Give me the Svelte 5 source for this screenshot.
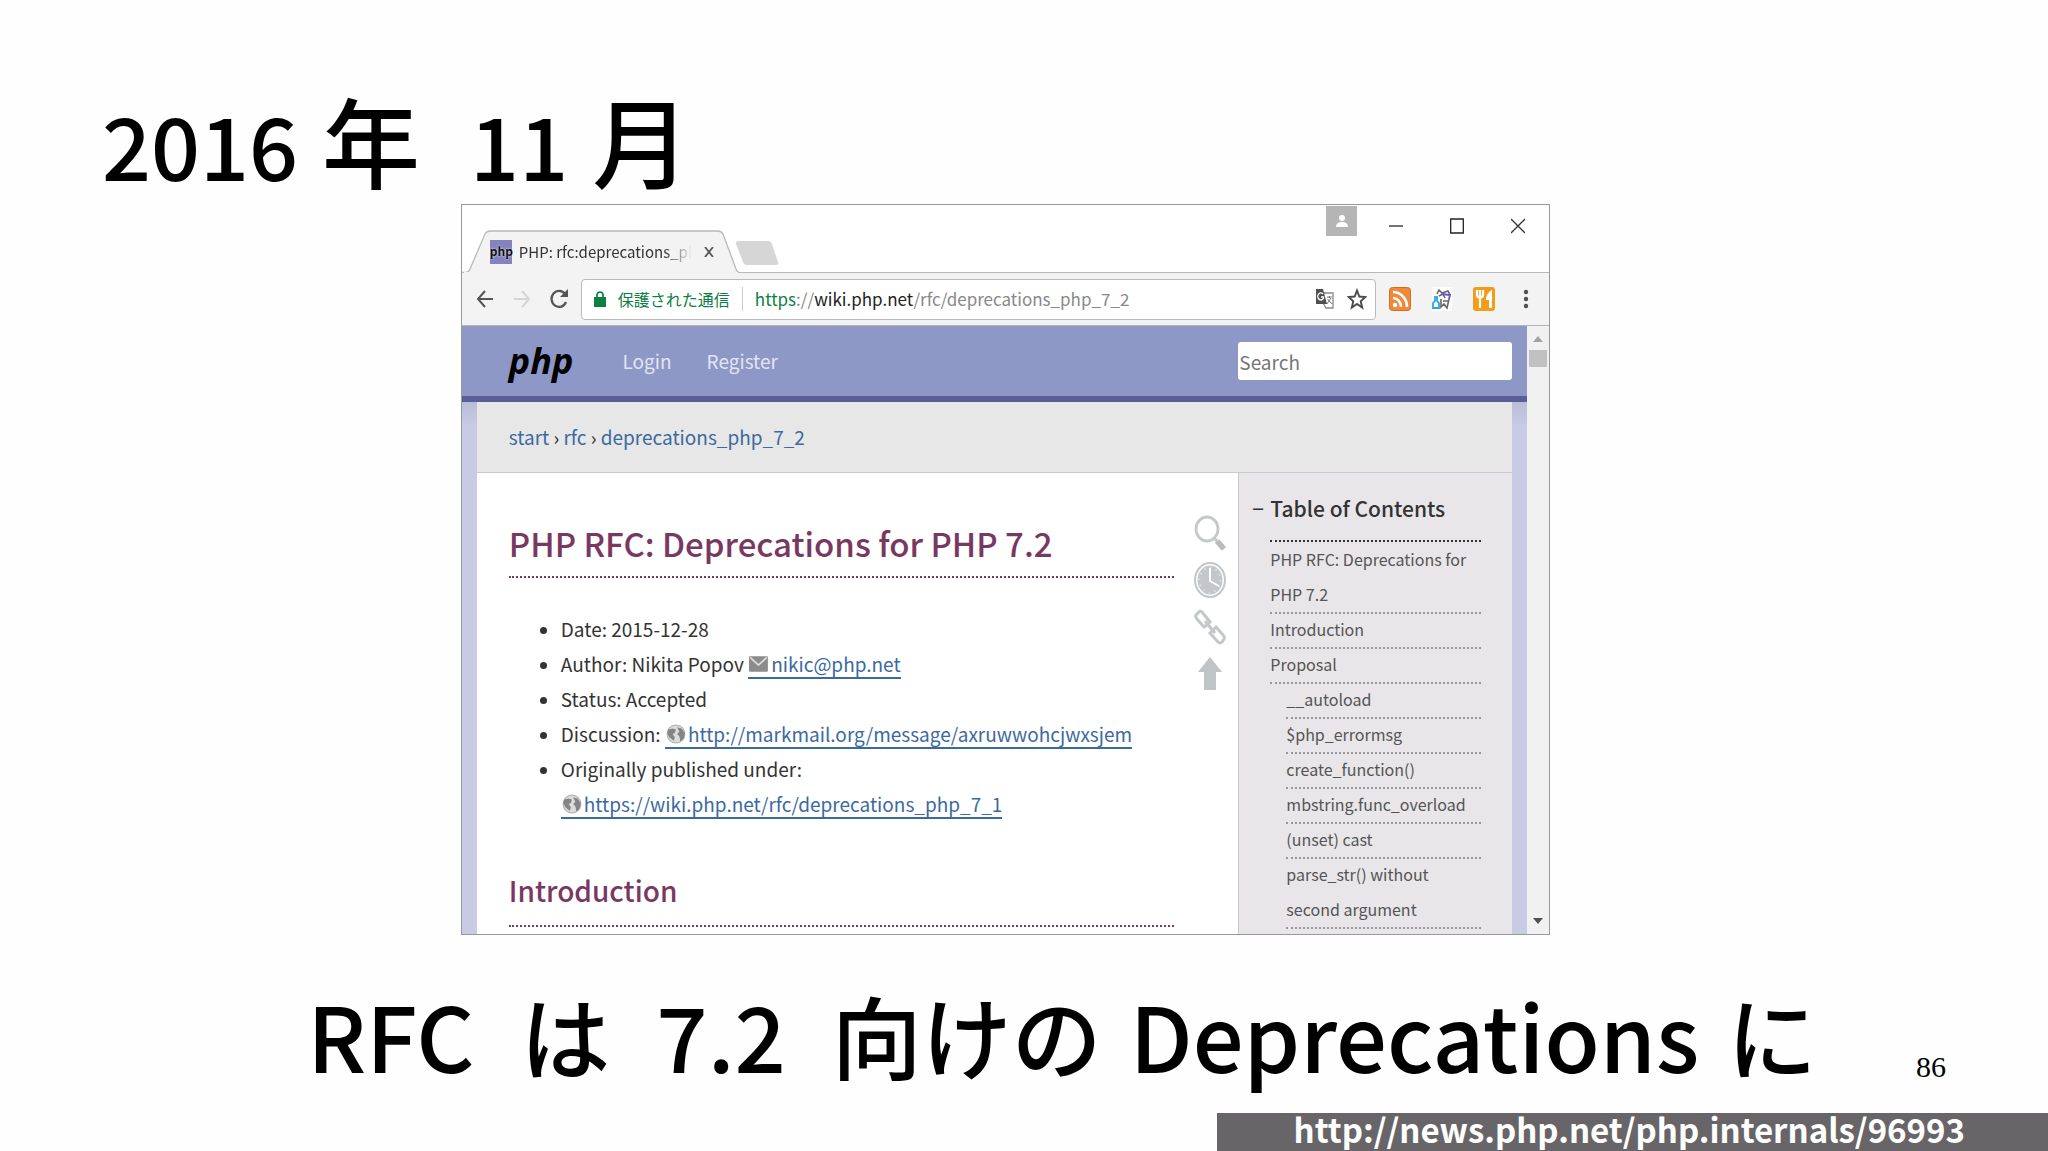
<script>
  const toc = [
    { text: 'PHP RFC: Deprecations for PHP 7.2', sub: false },
    { text: 'Introduction', sub: false },
    { text: 'Proposal', sub: false },
    { text: '__autoload', sub: true },
    { text: '$php_errormsg', sub: true },
    { text: 'create_function()', sub: true },
    { text: 'mbstring.func_overload', sub: true },
    { text: '(unset) cast', sub: true },
    { text: 'parse_str() without second argument', sub: true },
  ];
</script>

{#snippet globe()}
  <svg class="inline-icon" viewBox="0 0 18 18" aria-hidden="true">
    <circle cx="9" cy="9" r="8" fill="#dcdcdc" stroke="#b4b4b4" />
    <path d="M2 5 6 4 9 5 8 8 6 9 8 12 7 15 3 12 1 8Z M10 3 14 4 17 8 16 13 13 16 12 11 10 9 12 7Z" fill="#858585" />
  </svg>
{/snippet}

<main class="slide">
  <h1 class="title"><span>2016</span><span class="kanji">年</span><span class="month">11</span><span class="kanji">月</span></h1>

  <section class="browser" aria-label="PHP RFC">
    <div class="tabstrip">
      <div class="tab">
        <svg class="tab-shape" viewBox="0 0 277 43" aria-hidden="true">
          <path d="M0 42.500H4Q7 42 8 39L23 4Q25 1 28 1H256Q259 1 261 4L274 39Q275 42 277 42.500" fill="#f3f3f3" stroke="#b9b9b9" stroke-width="1.300" />
          <path d="M2 43H276" stroke="#f3f3f3" stroke-width="2" />
        </svg>
        <span class="favicon">php</span>
        <span class="tab-text">PHP: rfc:deprecations_ph</span>
        <button class="bare tab-close" aria-label="Close tab">
          <svg width="10" height="10" viewBox="0 0 10 10"><path d="M1 0 9 10M9 0 1 10" stroke="#555" stroke-width="1.800" /></svg>
        </button>
      </div>
      <button class="bare newtab" aria-label="New tab">
        <svg width="44" height="26" viewBox="0 0 44 26"><path d="M3 1H33Q36 1 37 4L43 22Q44 25 41 25H12Q9 25 8 22L1 4Q0 1 3 1Z" fill="#d6d6d6" /></svg>
      </button>
      <div class="controls">
        <button class="bare user" aria-label="Profile">
          <svg width="12" height="14" viewBox="0 0 12 14" fill="#fff"><circle cx="6" cy="4" r="3" /><path d="M0 13Q0 8 6 8T12 13Z" /></svg>
        </button>
        <button class="bare win" aria-label="Minimize"><svg width="14" height="16" viewBox="0 0 14 16"><path d="M0 8H14" stroke="#444" stroke-width="1.500" /></svg></button>
        <button class="bare win" aria-label="Maximize"><svg width="14" height="16" viewBox="0 0 14 16"><path d="M.700 1H13.300V15H.700Z" fill="none" stroke="#222" stroke-width="1.300" /></svg></button>
        <button class="bare win" aria-label="Close"><svg width="14" height="16" viewBox="0 0 14 16"><path d="M0 1 14 15M14 1 0 15" stroke="#333" stroke-width="1.300" /></svg></button>
      </div>
    </div>

    <div class="toolbar">
      <div class="nav-buttons">
        <button class="bare" aria-label="Back"><svg width="18" height="20" viewBox="0 0 18 20" fill="none" stroke="#555" stroke-width="2"><path d="M17 10H2M9 2 2 10 9 18" /></svg></button>
        <button class="bare" aria-label="Forward"><svg width="18" height="20" viewBox="0 0 18 20" fill="none" stroke="#d5d5d5" stroke-width="2"><path d="M1 10H16M9 2 16 10 9 18" /></svg></button>
        <button class="bare" aria-label="Reload"><svg width="18" height="20" viewBox="0 0 18 20"><path d="M15 5A7.500 8 0 1 0 16 13" fill="none" stroke="#555" stroke-width="2.300" /><path d="M18 0V8H10Z" fill="#555" /></svg></button>
      </div>
      <div class="address">
        <svg width="12" height="16" viewBox="0 0 12 16"><path d="M0 6H12V16H0Z" fill="#0b8043" /><path d="M3 7V4A3 3 0 0 1 9 4V7" fill="none" stroke="#0b8043" stroke-width="1.700" /></svg>
        <span class="secure">保護された通信</span>
        <span class="rule"></span>
        <span class="url"><span class="green">https</span>://<b>wiki.php.net</b>/rfc/deprecations_php_7_2</span>
        <button class="bare" aria-label="Translate">
          <svg width="20" height="22" viewBox="0 0 20 22"><path d="M8 5H18V20H11L8 15" fill="#fff" stroke="#888" stroke-width="1.300" /><path d="M12 9H17M14.500 8V10M12 16 16 10M12.500 11 17 16" stroke="#777" fill="none" /><path d="M1 1H8L12 16H1Z" fill="#505050" /><path d="M8 6A3 3.500 0 1 0 8.500 10V9H6" fill="none" stroke="#fff" stroke-width="1.400" /></svg>
        </button>
        <button class="bare" aria-label="Bookmark">
          <svg width="20" height="22" viewBox="0 0 20 22"><path d="M10 2.500 12.300 8.500 18.300 9 13.700 13.200 15.200 19.500 10 16 4.800 19.500 6.300 13.200 1.700 9 7.700 8.500Z" fill="none" stroke="#4a4a4a" stroke-width="1.900" /></svg>
        </button>
      </div>
      <div class="extensions">
        <button class="bare" aria-label="Feed"><svg width="22" height="24" viewBox="0 0 22 24"><rect x=".5" y=".5" width="21" height="23" rx="3" fill="#f0893a" stroke="#d96d1c" /><circle cx="6" cy="18" r="2.200" fill="#fff" /><path d="M4 11A8 9 0 0 1 12 20M4 5A14 15 0 0 1 18 20" fill="none" stroke="#fff" stroke-width="2.600" /></svg></button>
        <button class="bare" aria-label="Reader"><svg width="22" height="24" viewBox="0 0 22 24" fill="none"><path d="M1 0H21V24H1Z" fill="#fff" /><path d="M6 7 8 3 11 6 17 4 19 8M8 9 12 7 14 11M10 12V20L13 17 16 21 18 12M12 14H17" stroke="#666" stroke-width="1.600" /><path d="M11 7 19 8 18 12" stroke="#5a52d8" stroke-width="1.800" /><path d="M4 9V14L2 16V21H8V16L6 14V9" stroke="#25a7e8" stroke-width="1.800" /></svg></button>
        <button class="bare" aria-label="Dining"><svg width="22" height="24" viewBox="0 0 22 24"><rect width="22" height="24" rx="3" fill="#f39c1b" /><path d="M4 3V8Q4 10 7 11V21M7 3V11M10 3V8Q10 10 7 11" fill="none" stroke="#fff" stroke-width="2.200" /><path d="M19 3V21H16V13H13Q13 6 19 3Z" fill="#fff" /></svg></button>
        <button class="bare menu" aria-label="Menu"><svg width="6" height="22" viewBox="0 0 6 22" fill="#505050"><circle cx="3" cy="4" r="2.200" /><circle cx="3" cy="11" r="2.200" /><circle cx="3" cy="18" r="2.200" /></svg></button>
      </div>
    </div>

    <div class="viewport">
      <div class="page">
        <header class="site-header">
          <a class="logo" href="#php">php</a>
          <a href="#login">Login</a>
          <a href="#register">Register</a>
          <input type="search" placeholder="Search" aria-label="Search" />
        </header>
        <div class="sheet">
          <nav class="crumbs"><a href="#start">start</a> › <a href="#rfc">rfc</a> › <a href="#dep">deprecations_php_7_2</a></nav>
          <div class="columns">
            <article>
              <h2>PHP RFC: Deprecations for PHP 7.2</h2>
              <ul class="meta">
                <li>Date: 2015-12-28</li>
                <li>Author: Nikita Popov <a href="#mail"><svg class="inline-icon" viewBox="0 0 18 18" aria-hidden="true"><rect y="2" width="17" height="14" rx="1" fill="#8c8c8c" /><path d="M1 3 8.500 10 16 3" fill="none" stroke="#ddd" stroke-width="1.500" /></svg>nikic@php.net</a></li>
                <li>Status: Accepted</li>
                <li>Discussion: <a href="#discussion">{@render globe()}http://markmail.org/message/axruwwohcjwxsjem</a></li>
                <li>Originally published under:<br /><a href="#origin">{@render globe()}https://wiki.php.net/rfc/deprecations_php_7_1</a></li>
              </ul>
              <h3>Introduction</h3>
            </article>
            <div class="tools">
              <button class="bare" aria-label="Show page source"><svg width="32" height="36" viewBox="0 0 32 36" fill="none"><ellipse cx="13" cy="14" rx="11" ry="12" stroke="#c6c9cb" stroke-width="2.800" /><path d="M20 23 23 26" stroke="#c6c9cb" stroke-width="3" /><path d="M23 26 30 34" stroke="#b9bdbf" stroke-width="5.500" /></svg></button>
              <button class="bare" aria-label="Old revisions"><svg width="32" height="36" viewBox="0 0 32 36" fill="none"><ellipse cx="16" cy="18" rx="15" ry="17" fill="#fff" stroke="#c3c7c9" stroke-width="2" /><ellipse cx="16" cy="18" rx="12.500" ry="14.500" fill="#c3c7c9" /><ellipse cx="16" cy="18" rx="10.500" ry="12.500" stroke="#e9ebec" stroke-width="1.500" stroke-dasharray="1.300 4.700" /><path d="M16 6V19L25 24" stroke="#fff" stroke-width="2" /></svg></button>
              <button class="bare" aria-label="Backlinks"><svg width="32" height="36" viewBox="0 0 32 36" fill="none" stroke="#c3c7c9" stroke-width="3"><path d="M13 16 16 13 8 3Q6 1 4 4L2 6Q1 8 3 10L10 18 13 16" /><path d="M19 21 16 24 24 33Q26 35 28 33L30 30Q31 28 29 26L22 18 19 21" /><path d="M11 12 21 24" /></svg></button>
              <button class="bare" aria-label="Back to top"><svg width="32" height="36" viewBox="0 0 32 36"><path d="M16 1 28 16H22V34H10V16H4Z" fill="#bfc4c6" /></svg></button>
            </div>
            <aside>
              <div class="toc-head"><span class="minus">−</span><h3>Table of Contents</h3></div>
              <ul class="toc">
                {#each toc as item}
                  <li class:sub={item.sub}><a href="#toc">{item.text}</a></li>
                {/each}
              </ul>
            </aside>
          </div>
        </div>
      </div>
      <div class="scrollbar" aria-hidden="true">
        <svg width="10" height="6" viewBox="0 0 10 6"><path d="M0 6 5 0 10 6Z" fill="#a3a3a3" /></svg>
        <div class="thumb"></div>
        <svg class="down" width="10" height="6" viewBox="0 0 10 6"><path d="M0 0 5 6 10 0Z" fill="#505050" /></svg>
      </div>
    </div>
  </section>

  <div class="bottom">
    <p class="caption"><span>RFC</span><span class="wide">は</span><span class="wide">7.2</span><span class="wide">向けの</span><span>Deprecations</span><span>に</span></p>
    <span class="number">86</span>
  </div>
  <footer><a href="#news">http://news.php.net/php.internals/96993</a></footer>
</main>

<style>
  :global(body) { margin: 0; background: #fefefe; }
  * { box-sizing: border-box; }
  .slide {
    min-height: 100vh;
    display: flex;
    flex-direction: column;
    font-family: "Noto Sans CJK JP", "Noto Sans", sans-serif;
    color: #333;
  }
  .title {
    display: flex;
    align-items: baseline;
    gap: 24px;
    margin: 0;
    padding: 78px 0 0 102px;
    height: 204px;
    font-size: 86px;
    line-height: 120px;
    font-weight: 500;
    color: #000;
  }
  .kanji { font-size: 98px; }
  .month { margin-left: 26px; }
  .bare { display: flex; padding: 0; border: 0; background: none; align-items: center; justify-content: center; }
  svg { display: block; flex: none; }
  a { color: #3b6aa0; text-decoration: none; }

  .browser { width: 53.2%; margin-left: 22.5%; border: 1px solid #999; background: #fff; }
  .tabstrip { display: flex; height: 68px; border-bottom: 1px solid #b9b9b9; }
  .tab { position: relative; align-self: flex-end; display: flex; align-items: center; width: 277px; height: 43px; margin-bottom: -1px; padding-left: 28px; }
  .tab-shape { position: absolute; inset: 0; width: 100%; height: 100%; }
  .favicon { position: relative; width: 22px; height: 24px; background: #8583be; color: #111; font-size: 12px; line-height: 22px; font-weight: 700; text-align: center; text-shadow: 0 0 2px #fff; }
  .tab-text { position: relative; flex: none; width: 173px; margin-left: 7px; white-space: nowrap; font-size: 15px; line-height: 24px; mask-image: linear-gradient(90deg, #000 84%, transparent); }
  .tab-close { position: relative; margin-left: 12px; }
  .newtab { align-self: flex-end; margin: 0 0 6px -4px; }
  .controls { display: flex; margin-left: auto; padding-right: 24px; gap: 47px; }
  .win { height: 42px; }
  .user { width: 31px; height: 30px; background: #b5b5b5; margin: 1px -15px 0 0; }

  .toolbar { display: flex; align-items: center; gap: 13px; height: 53px; padding: 0 20px 0 14px; background: #f3f3f3; border-bottom: 1px solid #b5b5b5; }
  .nav-buttons { display: flex; gap: 19px; }
  .address { flex: 1; display: flex; align-items: center; gap: 12px; height: 41px; padding: 0 8px 0 12px; background: #fff; border: 1px solid #bbb; border-radius: 4px; font-size: 17px; line-height: 26px; white-space: nowrap; }
  .secure { color: #0b8043; font-size: 16px; }
  .rule { width: 1px; height: 24px; background: #ccc; }
  .url { flex: 1; color: #888; }
  .url b { font-weight: 400; color: #222; }
  .green { color: #0b8043; }
  .extensions { display: flex; align-items: center; gap: 20px; }
  .menu { margin-left: 8px; }

  .viewport { display: flex; }
  .page { flex: 1; min-width: 0; background: linear-gradient(#b4b9d6 70px, #c8cbe3 100px); }
  .site-header { display: flex; align-items: center; height: 76px; padding: 0 15px 0 47px; background: #8e98c6; border-bottom: 6px solid #595e96; font-size: 19px; line-height: 30px; }
  .site-header a { color: #e2e4f3; margin-right: 35px; }
  .site-header .logo { color: #000; font-family: "Open Sans", sans-serif; font-style: italic; font-weight: 700; font-size: 36px; line-height: 42px; margin-right: 49px; }
  .site-header input { width: 274px; height: 38px; margin-left: auto; padding: 0 1px; border: 0; border-radius: 3px; background: #fff; font: inherit; }
  .site-header input::placeholder { color: #777; opacity: 1; }
  .sheet { margin: 0 15px; background: #fff; }
  .crumbs { height: 71px; padding-left: 32px; background: #e7e7e7; border-bottom: 1px solid #c8cacc; font-size: 19px; line-height: 70px; }
  .columns { display: flex; }
  article { flex: 1; min-width: 0; padding: 45px 20px 7px 32px; }
  h2, article h3 { margin: 0; color: #793862; border-bottom: 2px dotted #793862; font-weight: 500; }
  h2 { font-size: 33px; line-height: 50px; padding-bottom: 8px; }
  article h3 { font-size: 28px; line-height: 50px; padding-bottom: 10px; }
  .meta { margin: 33px 0 44px; padding-left: 52px; font-size: 19px; line-height: 35px; white-space: nowrap; }
  .meta a { border-bottom: 2px solid #3b6aa0; }
  .inline-icon { display: inline-block; width: 20px; height: 20px; margin: 0 2px 0 1px; vertical-align: -2px; }
  .tools { display: flex; flex-direction: column; gap: 11px; padding: 42px 12px 0 0; }
  aside { width: 274px; padding: 17px 31px 0 31px; background: #e8e6e8; border-left: 1px solid #c8cacc; }
  .toc-head { display: flex; border-bottom: 2px dotted #333; height: 52px; font-size: 21px; line-height: 36px; }
  .minus { width: 18px; margin-left: -18px; }
  .toc-head h3 { margin: 0; font-size: 21px; font-weight: 500; }
  .toc { list-style: none; margin: 0; padding: 0; font-size: 16px; line-height: 35px; }
  .toc li { border-bottom: 2px dotted #999; margin-bottom: -2px; }
  .toc .sub { margin-left: 16px; }
  .toc a { color: #555; }
  .scrollbar { display: flex; flex-direction: column; align-items: center; width: 22px; padding: 10px 0; background: #f1f1f1; }
  .thumb { width: 18px; height: 17px; margin-top: 8px; background: #c1c1c1; }
  .down { margin-top: auto; }

  .bottom { flex: 1; display: flex; align-items: flex-start; padding-top: 39px; color: #000; }
  .caption { display: flex; gap: 28px; flex: none; margin: 0 0 0 15%; font-size: 90px; line-height: 120px; font-weight: 500; white-space: nowrap; }
  .wide { margin-left: 18px; }
  .number { margin-left: auto; padding: 75px 102px 0 0; font-family: "Liberation Serif", serif; font-size: 30px; line-height: 36px; }
  footer { align-self: flex-end; width: 40.6%; height: 38px; padding-right: 83px; background: #686569; text-align: right; font-size: 33px; line-height: 33px; font-weight: 700; }
  footer a { color: #fff; }
</style>
